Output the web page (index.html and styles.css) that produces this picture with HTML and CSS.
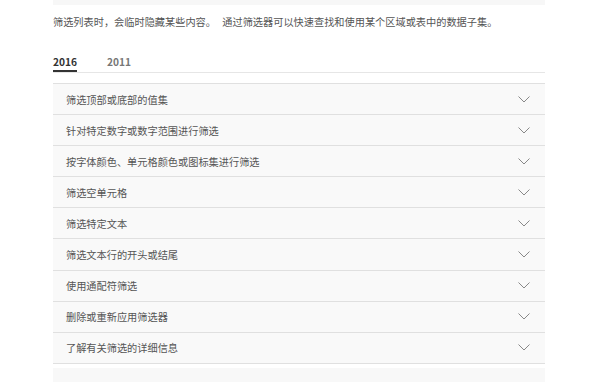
FILE: index.html
```html
<!DOCTYPE html>
<html lang="zh-CN">
<head>
    <meta charset="UTF-8">
    <meta name="viewport" content="width=device-width, initial-scale=1.0">
    <title>筛选区域或表中的数据</title>
    <link rel="stylesheet" href="styles.css">
</head>
<body>
    <div class="article">
        <div class="top-box"></div>
        <p class="intro">筛选列表时，会临时隐藏某些内容。 通过筛选器可以快速查找和使用某个区域或表中的数据子集。</p>

        <div class="tabs">
            <span class="tab active">2016</span>
            <span class="tab">2011</span>
        </div>

        <div class="accordion">
            <div class="row"><span>筛选顶部或底部的值集</span><svg class="chevron" viewBox="0 0 12 7"><path d="M0.5 0.5 L6 6 L11.5 0.5"/></svg></div>
            <div class="row"><span>针对特定数字或数字范围进行筛选</span><svg class="chevron" viewBox="0 0 12 7"><path d="M0.5 0.5 L6 6 L11.5 0.5"/></svg></div>
            <div class="row"><span>按字体颜色、单元格颜色或图标集进行筛选</span><svg class="chevron" viewBox="0 0 12 7"><path d="M0.5 0.5 L6 6 L11.5 0.5"/></svg></div>
            <div class="row"><span>筛选空单元格</span><svg class="chevron" viewBox="0 0 12 7"><path d="M0.5 0.5 L6 6 L11.5 0.5"/></svg></div>
            <div class="row"><span>筛选特定文本</span><svg class="chevron" viewBox="0 0 12 7"><path d="M0.5 0.5 L6 6 L11.5 0.5"/></svg></div>
            <div class="row"><span>筛选文本行的开头或结尾</span><svg class="chevron" viewBox="0 0 12 7"><path d="M0.5 0.5 L6 6 L11.5 0.5"/></svg></div>
            <div class="row"><span>使用通配符筛选</span><svg class="chevron" viewBox="0 0 12 7"><path d="M0.5 0.5 L6 6 L11.5 0.5"/></svg></div>
            <div class="row"><span>删除或重新应用筛选器</span><svg class="chevron" viewBox="0 0 12 7"><path d="M0.5 0.5 L6 6 L11.5 0.5"/></svg></div>
            <div class="row"><span>了解有关筛选的详细信息</span><svg class="chevron" viewBox="0 0 12 7"><path d="M0.5 0.5 L6 6 L11.5 0.5"/></svg></div>
        </div>

        <div class="bottom-box"></div>
    </div>
</body>
</html>
```

FILE: styles.css
```css
body {
    margin: 0;
    background-color: #fff;
    font-family: "Noto Sans CJK SC", "Noto Sans", sans-serif;
    color: #555;
}
.article {
    width: 492px;
    margin-left: 53px;
}
.top-box {
    height: 5px;
    background-color: #f7f7f7;
}
.intro {
    margin: 9px 0 0;
    font-size: 10.2px;
    line-height: 16px;
    word-spacing: 4px;
    color: #555;
    white-space: nowrap;
}
.tabs {
    display: flex;
    gap: 30px;
    margin-top: 24px;
    border-bottom: 1px solid #e6e6e6;
}
.tab {
    font-size: 10.2px;
    line-height: 16px;
    font-weight: bold;
    color: #777;
    border-bottom: 2px solid transparent;
}
.tab.active {
    color: #333;
    border-bottom-color: #333;
}
.accordion {
    margin-top: 10px;
    border-bottom: 1px solid #e0e0e0;
}
.row {
    display: flex;
    align-items: center;
    justify-content: space-between;
    box-sizing: border-box;
    height: 31.1px;
    padding: 0 15px 0 13px;
    border-top: 1px solid #e0e0e0;
    background-color: #f9f9f9;
    font-size: 10.2px;
    color: #555;
}
.chevron {
    width: 12px;
    height: 7px;
    fill: none;
    stroke: #888;
    stroke-width: 1;
}
.bottom-box {
    height: 14px;
    margin-top: 4px;
    background-color: #f8f8f8;
}
```
